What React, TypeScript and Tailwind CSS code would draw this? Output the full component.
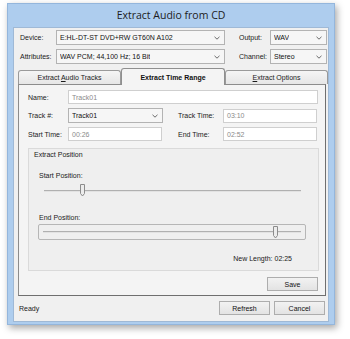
import React from "react";

function Chevron() {
  return (
    <svg width="6" height="4" viewBox="0 0 6 4" className="shrink-0">
      <path d="M0.5 0.8 L3 3.2 L5.5 0.8" fill="none" stroke="#6a6a6a" strokeWidth="1" />
    </svg>
  );
}

function Combo({ className, text }: { className: string; text: string }) {
  return (
    <div
      className={
        "h-[15px] flex items-center justify-between border border-[#b3b3b3] bg-[#f6f6f6] pl-[3px] pr-[4px] text-[#111] " +
        className
      }
    >
      <span className="truncate">{text}</span>
      <Chevron />
    </div>
  );
}

function TextBox({ className, text }: { className: string; text: string }) {
  return (
    <div
      className={
        "h-[14px] flex items-center border border-[#cfcfcf] bg-white pl-[3px] text-[#8a8a8a] " + className
      }
    >
      {text}
    </div>
  );
}

function Button({ className, text }: { className: string; text: string }) {
  return (
    <div
      className={
        "h-[14px] flex items-center justify-center border border-[#adadad] bg-gradient-to-b from-[#f2f2f2] to-[#e3e3e3] text-[#111] " +
        className
      }
    >
      {text}
    </div>
  );
}

function Thumb() {
  return (
    <svg width="7" height="13" viewBox="0 0 7 13">
      <path d="M1.5 0.5 H5.5 V9.5 L3.5 12 L1.5 9.5 Z" fill="#ececec" stroke="#8c8c8c" strokeWidth="1" />
    </svg>
  );
}

export default function App() {
  return (
    <div className="w-[350px] h-[339px] bg-white overflow-hidden font-['Liberation_Sans',Arial,sans-serif] text-[7px] leading-[9px]">
      <div className="ml-[7px] mt-[3px] w-[328px] h-[322px] bg-[#aecdee] border border-[#94b6dc] shadow-[2px_3px_7px_rgba(0,0,0,0.35)] flex flex-col">
        <div className="h-[23px] flex items-center justify-center text-[10.5px] text-[#1c1c1c] font-['Open_Sans',sans-serif]">
          Extract Audio from CD
        </div>
        <div className="mx-[5px] mb-[2px] flex-1 bg-[#f0f0f0] border border-[#9fb9d6] flex flex-col">
          {/* Device row */}
          <div className="mt-[2px] flex items-center">
            <div className="w-[36px] pl-[6px] box-content text-[#1a1a1a]">Device:</div>
            <Combo className="w-[169px]" text="E:HL-DT-ST DVD+RW GT60N A102" />
            <div className="ml-[14px] w-[31px] text-[#1a1a1a]">Output:</div>
            <Combo className="w-[57px]" text="WAV" />
          </div>
          {/* Attributes row */}
          <div className="mt-[4px] flex items-center">
            <div className="w-[36px] pl-[6px] box-content text-[#1a1a1a]">Attributes:</div>
            <Combo className="w-[169px]" text="WAV PCM; 44,100 Hz; 16 Bit" />
            <div className="ml-[14px] w-[31px] text-[#1a1a1a]">Channel:</div>
            <Combo className="w-[57px]" text="Stereo" />
          </div>
          {/* Tabs */}
          <div className="mt-[3px] ml-[4px] h-[17px] flex items-end relative z-10">
            <div className="w-[103px] h-[14px] border border-b-0 border-[#9a9a9a] rounded-t-[3px] bg-gradient-to-b from-[#f5f5f5] to-[#e6e6e6] flex items-center justify-center text-[#1a1a1a]">
              <span>
                Extract <span className="underline">A</span>udio Tracks
              </span>
            </div>
            <div className="w-[104px] h-[17px] -mb-px border border-b-0 border-[#8f8f8f] rounded-t-[3px] bg-[#f4f4f4] flex items-center justify-center font-bold text-[#111]">
              Extract Time Range
            </div>
            <div className="w-[103px] h-[14px] border border-b-0 border-[#9a9a9a] rounded-t-[3px] bg-gradient-to-b from-[#f5f5f5] to-[#e6e6e6] flex items-center justify-center text-[#1a1a1a]">
              <span>
                <span className="underline">E</span>xtract Options
              </span>
            </div>
          </div>
          {/* Panel */}
          <div className="ml-[4px] w-[308px] h-[212px] border border-[#8c8c8c] border-r-[#6f6f6f] border-b-[#6f6f6f] bg-[#f4f4f4] flex flex-col">
            <div className="mt-[5px] flex items-center">
              <div className="pl-[9px] w-[40px] box-content text-[#1a1a1a]">Name:</div>
              <TextBox className="w-[250px]" text="Track01" />
            </div>
            <div className="mt-[4px] flex items-center">
              <div className="pl-[9px] w-[40px] box-content text-[#1a1a1a]">Track #:</div>
              <Combo className="w-[95px] h-[14px]" text="Track01" />
              <div className="ml-[15px] w-[45px] text-[#1a1a1a]">Track Time:</div>
              <TextBox className="w-[94px]" text="03:10" />
            </div>
            <div className="mt-[4px] flex items-center">
              <div className="pl-[9px] w-[40px] box-content text-[#1a1a1a]">Start Time:</div>
              <TextBox className="w-[94px]" text="00:26" />
              <div className="ml-[16px] w-[45px] text-[#1a1a1a]">End Time:</div>
              <TextBox className="w-[94px]" text="02:52" />
            </div>
            {/* Group */}
            <div className="mt-[7px] ml-[9px] w-[291px] h-[123px] border border-[#dadada] bg-[#efefef] flex flex-col">
              <div className="mt-[1px] pl-[5px] text-[#1a1a1a]">Extract Position</div>
              <div className="mt-[12px] pl-[10px] text-[#1a1a1a]">Start Position:</div>
              <div className="mt-[4px] ml-[15px] w-[257px] h-[14px] relative flex items-center">
                <div className="w-full h-[2px] bg-[#b0b0b0] border-b border-[#e2e2e2]" />
                <div className="absolute left-[35px] top-[0px]">
                  <Thumb />
                </div>
              </div>
              <div className="mt-[15px] pl-[10px] text-[#1a1a1a]">End Position:</div>
              <div className="mt-[2px] ml-[9px] w-[268px] h-[16px] border border-[#b6b6b6] rounded-[2px] relative flex items-center px-[4px]">
                <div className="w-full h-[2px] bg-[#b0b0b0] border-b border-[#e2e2e2]" />
                <div className="absolute left-[233px] top-[1px]">
                  <Thumb />
                </div>
              </div>
              <div className="mt-[14px] pr-[26px] text-right text-[#1a1a1a]">New Length: 02:25</div>
            </div>
            <div className="mt-[6px] flex justify-end pr-[7px]">
              <Button className="w-[51px]" text="Save" />
            </div>
          </div>
          {/* Status row */}
          <div className="mt-[5px] flex items-center">
            <div className="pl-[5px] flex-1 text-[#1a1a1a]">Ready</div>
            <div className="flex gap-[4px] pr-[3px]">
              <Button className="w-[51px]" text="Refresh" />
              <Button className="w-[51px]" text="Cancel" />
            </div>
          </div>
        </div>
      </div>
    </div>
  );
}
